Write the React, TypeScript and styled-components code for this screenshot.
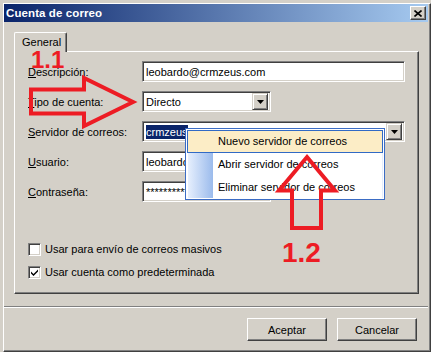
import React from "react";
import styled, { createGlobalStyle } from "styled-components";

const Global = createGlobalStyle`
  html, body { margin: 0; padding: 0; background: #d4d0c8; }
  body { font-family: "Liberation Sans", Arial, sans-serif; font-size: 11px; color: #000; }
  * { box-sizing: border-box; }
`;

const Screen = styled.div`
  position: relative;
  width: 431px;
  height: 352px;
  overflow: hidden;
  background: #d4d0c8;
  padding: 3px 0 0 3px;
`;

const Frame = styled.div`
  width: 428px;
  height: 349px;
  border-top: 1px solid #ffffff;
  border-left: 1px solid #ffffff;
  border-right: 1px solid #404040;
  border-bottom: 1px solid #404040;
  box-shadow: inset -1px -1px 0 #808080;
  display: flex;
  flex-direction: column;
`;

const TitleBar = styled.div`
  height: 18px;
  margin-right: 2px;
  background: linear-gradient(to right, #0a246a, #a6caf0);
  display: flex;
  align-items: center;
  justify-content: space-between;
  padding: 0 2px 0 2px;
`;

const TitleText = styled.span`
  color: #ffffff;
  font-weight: bold;
  font-size: 11.5px;
  letter-spacing: 0.1px;
`;

const CloseButton = styled.div`
  width: 16px;
  height: 14px;
  background: #d4d0c8;
  border-top: 1px solid #ffffff;
  border-left: 1px solid #ffffff;
  border-right: 1px solid #404040;
  border-bottom: 1px solid #404040;
  box-shadow: inset -1px -1px 0 #808080;
  display: flex;
  align-items: center;
  justify-content: center;
`;

const Body = styled.div`
  padding: 10px 0 0 10px;
  display: flex;
  flex-direction: column;
`;

const TabRow = styled.div`
  display: flex;
  height: 20px;
  position: relative;
  z-index: 1;
  margin-bottom: -1px;
`;

const Tab = styled.div`
  width: 53px;
  height: 20px;
  background: #d4d0c8;
  border-top: 1px solid #ffffff;
  border-left: 1px solid #ffffff;
  border-right: 1px solid #404040;
  border-top-left-radius: 2px;
  border-top-right-radius: 2px;
  box-shadow: inset -1px 0 0 #808080;
  padding: 3px 0 0 7px;
`;

const Panel = styled.div`
  width: 405px;
  height: 243px;
  border-top: 1px solid #ffffff;
  border-left: 1px solid #ffffff;
  border-right: 1px solid #404040;
  border-bottom: 1px solid #404040;
  box-shadow: inset -1px -1px 0 #808080;
  padding: 9px 0 0 13px;
  display: flex;
  flex-direction: column;
`;

const FormGrid = styled.div`
  display: grid;
  grid-template-columns: 114px auto;
  grid-auto-rows: 21px;
  row-gap: 9px;
  align-items: center;
`;

const Label = styled.label`
  white-space: nowrap;
  padding-top: 1px;
`;

const Sunken = styled.div<{ $w: number }>`
  width: ${(p) => p.$w}px;
  height: 21px;
  background: #ffffff;
  border-top: 1px solid #808080;
  border-left: 1px solid #808080;
  border-right: 1px solid #ffffff;
  border-bottom: 1px solid #ffffff;
  box-shadow: inset 1px 1px 0 #404040, inset -1px -1px 0 #d4d0c8;
  display: flex;
  align-items: center;
  padding: 0 2px 0 2px;
  overflow: hidden;
  white-space: nowrap;
`;

const FieldText = styled.span`
  flex: 1;
  padding-left: 1px;
`;

const Selected = styled.span`
  background: #0a246a;
  color: #ffffff;
  padding: 1px 0;
`;

const DropButton = styled.div`
  width: 16px;
  height: 17px;
  background: #d4d0c8;
  border-top: 1px solid #d4d0c8;
  border-left: 1px solid #d4d0c8;
  border-right: 1px solid #404040;
  border-bottom: 1px solid #404040;
  box-shadow: inset 1px 1px 0 #ffffff, inset -1px -1px 0 #808080;
  display: flex;
  align-items: center;
  justify-content: center;
  flex: none;
`;

const Checks = styled.div`
  display: flex;
  flex-direction: column;
  gap: 9px;
  margin-top: 40px;
`;

const CheckRow = styled.div`
  display: flex;
  align-items: center;
  gap: 4px;
  height: 14px;
`;

const Box = styled.div`
  width: 13px;
  height: 13px;
  background: #ffffff;
  border-top: 1px solid #808080;
  border-left: 1px solid #808080;
  border-right: 1px solid #ffffff;
  border-bottom: 1px solid #ffffff;
  box-shadow: inset 1px 1px 0 #404040, inset -1px -1px 0 #d4d0c8;
  display: flex;
  align-items: center;
  justify-content: center;
`;

const Separator = styled.div`
  height: 2px;
  margin: 12px 2px 0 0;
  border-top: 1px solid #808080;
  border-bottom: 1px solid #ffffff;
`;

const ButtonRow = styled.div`
  display: flex;
  justify-content: flex-end;
  gap: 10px;
  padding: 10px 13px 0 0;
`;

const Button = styled.div`
  width: 80px;
  height: 23px;
  background: #d4d0c8;
  border-top: 1px solid #ffffff;
  border-left: 1px solid #ffffff;
  border-right: 1px solid #404040;
  border-bottom: 1px solid #404040;
  box-shadow: inset -1px -1px 0 #808080;
  display: flex;
  align-items: center;
  justify-content: center;
`;

const Menu = styled.div`
  position: absolute;
  left: 185px;
  top: 128px;
  width: 200px;
  height: 72px;
  background: #ffffff;
  border: 1px solid #3b6cc4;
  padding: 1px;
  display: flex;
  flex-direction: column;
  z-index: 5;
`;

const MenuItem = styled.div<{ $hot?: boolean }>`
  height: 23px;
  display: flex;
  align-items: center;
  border: 1px solid ${(p) => (p.$hot ? "#316ac5" : "transparent")};
  background: ${(p) =>
    p.$hot
      ? "#fcedc6"
      : "linear-gradient(to right, #e6effd 0px, #9bbbec 25px, #ffffff 25px)"};
  padding-left: 30px;
  white-space: nowrap;
`;

const Overlay = styled.svg`
  position: absolute;
  left: 0;
  top: 0;
  width: 431px;
  height: 352px;
  pointer-events: none;
  z-index: 10;
`;

const Mark = styled.div<{ $size: number; $x: number; $y: number }>`
  position: absolute;
  left: ${(p) => p.$x}px;
  top: ${(p) => p.$y}px;
  font-family: "Liberation Sans", Arial, sans-serif;
  font-weight: bold;
  font-size: ${(p) => p.$size}px;
  line-height: 1;
  color: #ed1c24;
  z-index: 11;
  pointer-events: none;
`;

const Triangle = () => (
  <svg width="7" height="4" viewBox="0 0 7 4">
    <path d="M0 0H7L3.5 4Z" fill="#000" />
  </svg>
);

export default function App() {
  return (
    <>
      <Global />
      <Screen>
        <Frame>
          <TitleBar>
            <TitleText>Cuenta de correo</TitleText>
            <CloseButton>
              <svg width="8" height="7" viewBox="0 0 8 7">
                <path d="M0.5 0.5L7.5 6.5M7.5 0.5L0.5 6.5" stroke="#000" strokeWidth="1.6" />
              </svg>
            </CloseButton>
          </TitleBar>
          <Body>
            <TabRow>
              <Tab>General</Tab>
            </TabRow>
            <Panel>
              <FormGrid>
                <Label>
                  <u>D</u>escripción:
                </Label>
                <Sunken $w={263}>
                  <FieldText>leobardo@crmzeus.com</FieldText>
                </Sunken>
                <Label>
                  <u>T</u>ipo de cuenta:
                </Label>
                <Sunken $w={129}>
                  <FieldText>Directo</FieldText>
                  <DropButton>
                    <Triangle />
                  </DropButton>
                </Sunken>
                <Label>
                  <u>S</u>ervidor de correos:
                </Label>
                <Sunken $w={263}>
                  <FieldText>
                    <Selected>crmzeus</Selected>
                  </FieldText>
                  <DropButton>
                    <Triangle />
                  </DropButton>
                </Sunken>
                <Label>
                  <u>U</u>suario:
                </Label>
                <Sunken $w={129}>
                  <FieldText>leobardo</FieldText>
                </Sunken>
                <Label>
                  <u>C</u>ontraseña:
                </Label>
                <Sunken $w={129}>
                  <FieldText>**********</FieldText>
                </Sunken>
              </FormGrid>
              <Checks>
                <CheckRow>
                  <Box />
                  <span>Usar para envío de correos masivos</span>
                </CheckRow>
                <CheckRow>
                  <Box>
                    <svg width="7" height="7" viewBox="0 0 7 7">
                      <path d="M0 2.5L2.5 5L7 0.5V2.5L2.5 7L0 4.5Z" fill="#000" />
                    </svg>
                  </Box>
                  <span>Usar cuenta como predeterminada</span>
                </CheckRow>
              </Checks>
            </Panel>
          </Body>
          <Separator />
          <ButtonRow>
            <Button>Aceptar</Button>
            <Button>Cancelar</Button>
          </ButtonRow>
        </Frame>

        <Menu>
          <MenuItem $hot>Nuevo servidor de correos</MenuItem>
          <MenuItem>Abrir servidor de correos</MenuItem>
          <MenuItem>Eliminar servidor de correos</MenuItem>
        </Menu>

        <Overlay viewBox="0 0 431 352">
          <polygon
            points="31,89.5 84,89.5 84,78 133,102 84,126 84,113.5 31,113.5"
            fill="none"
            stroke="#ed1c24"
            strokeWidth="4"
          />
          <polygon
            points="307,157 335,190.5 321,190.5 321,228 292,228 292,190.5 279,190.5"
            fill="none"
            stroke="#ed1c24"
            strokeWidth="4"
          />
        </Overlay>
        <Mark $size={24} $x={31} $y={48}>1.1</Mark>
        <Mark $size={28} $x={282} $y={239}>1.2</Mark>
      </Screen>
    </>
  );
}
